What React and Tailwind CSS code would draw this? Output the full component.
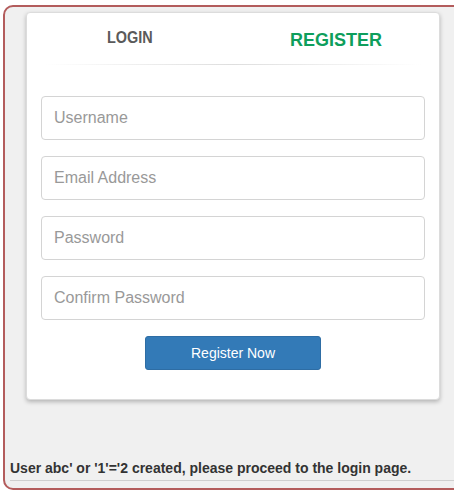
export default function App() {
  const fields = ["Username", "Email Address", "Password", "Confirm Password"];
  return (
    <div className="w-[454px] h-[491px] overflow-hidden bg-white" style={{ fontFamily: '"Liberation Sans", Arial, sans-serif' }}>
      <div className="ml-[3px] mt-[5px] w-[480px] h-[485px] border-2 border-[#b35c5c] rounded-[10px] bg-[#f0f0f0] flex flex-col">
        <div className="ml-[21px] mt-[5px] w-[414px] h-[388px] bg-white rounded-[4px] border border-[#dcdcdc] shadow-[0_2px_4px_rgba(0,0,0,0.25)]">
          <div className="flex h-[51px]">
            <div className="w-1/2 flex items-center justify-center pb-[2px] text-[17px] font-bold text-[#5a5a5a]">
              <span className="inline-block scale-x-[0.85]">LOGIN</span>
            </div>
            <div className="w-1/2 flex items-center justify-center pt-[4px] text-[18px] font-bold text-[#0e9e5c]">REGISTER</div>
          </div>
          <div className="mx-[18px] h-px bg-gradient-to-r from-transparent via-[#dedede] to-transparent"></div>
          <div className="px-[14px] pt-[31px] flex flex-col gap-[16px]">
            {fields.map((f) => (
              <div key={f} className="h-[44px] border border-[#d4d4d4] rounded-[4px] flex items-center px-[12px] text-[16px] text-[#999]">
                {f}
              </div>
            ))}
          </div>
          <div className="flex justify-center mt-[16px]">
            <button className="w-[176px] h-[34px] bg-[#337ab7] border border-[#2e6da4] rounded-[3px] text-white text-[14px]">
              Register Now
            </button>
          </div>
        </div>
        <div className="mt-auto ml-[5px] pb-[7px]">
          <div className="text-[14px] font-bold text-[#333] leading-[20px] pb-[2px]">
            User abc' or '1'='2 created, please proceed to the login page.
          </div>
          <div className="h-px bg-[#cfcfcf]"></div>
        </div>
      </div>
    </div>
  );
}
